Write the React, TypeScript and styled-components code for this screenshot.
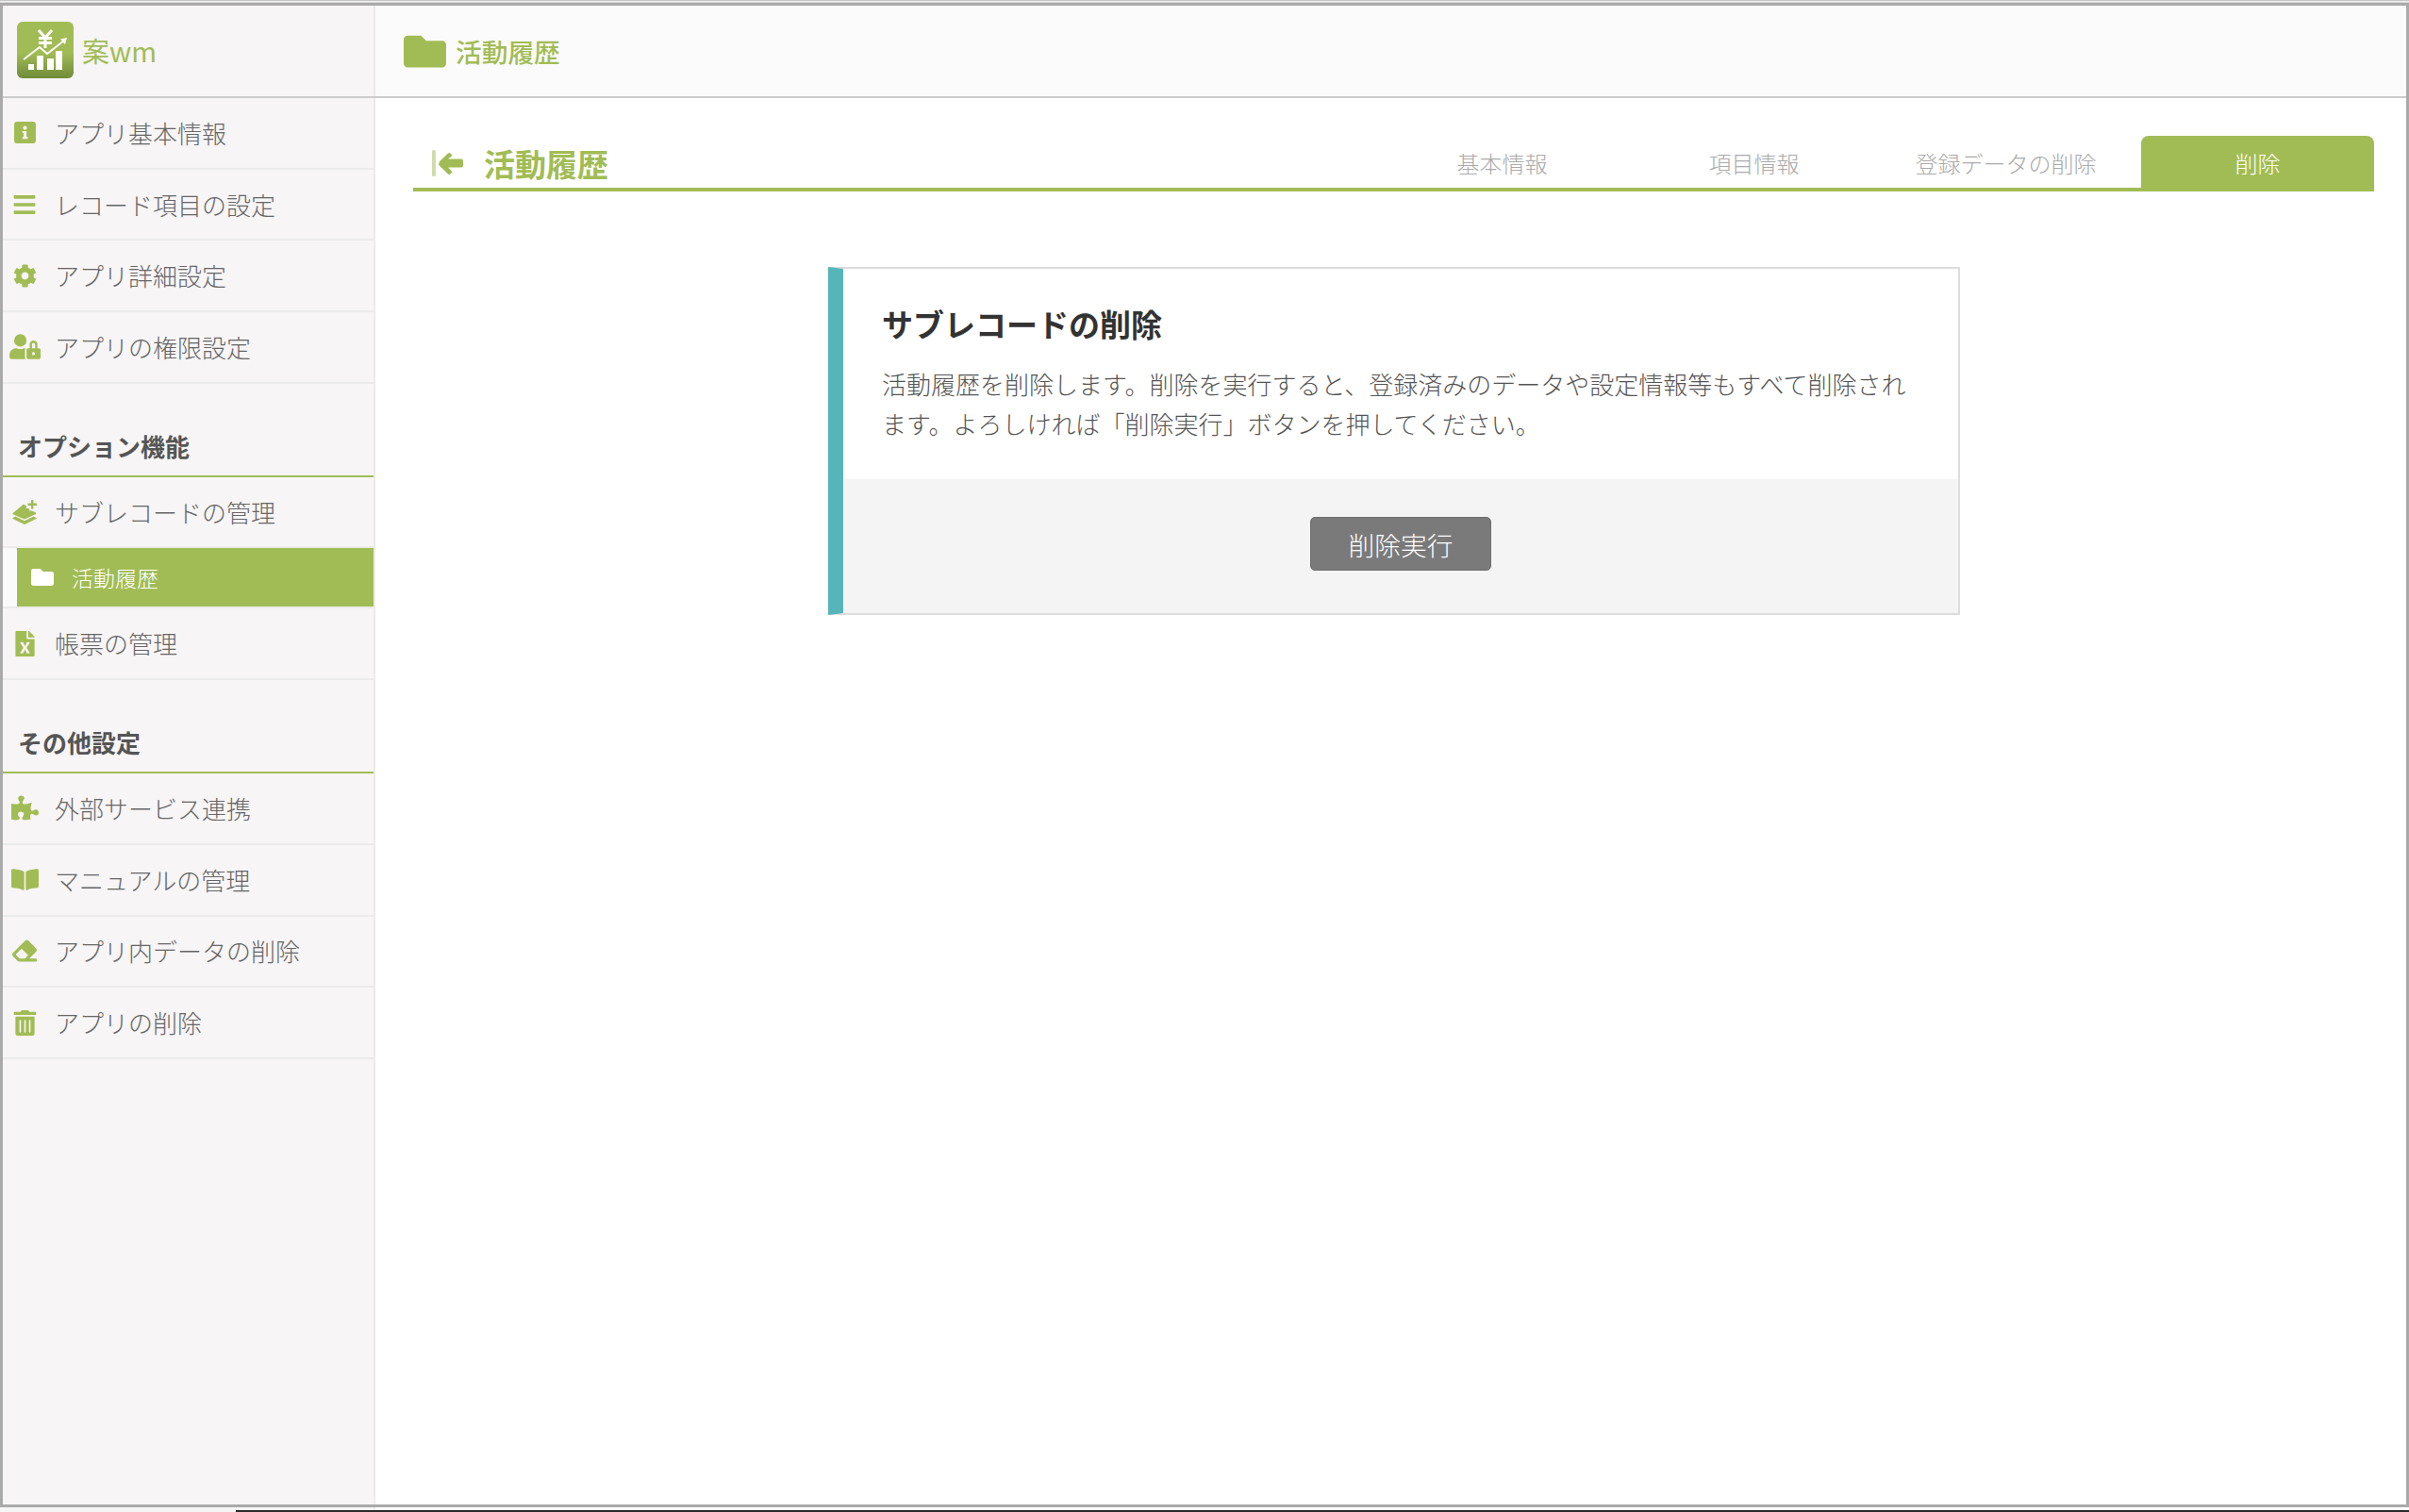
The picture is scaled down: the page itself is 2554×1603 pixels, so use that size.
import React from "react";
import styled, { createGlobalStyle } from "styled-components";
import { FaBars, FaCog, FaUserLock, FaFolder, FaFileExcel, FaPuzzlePiece, FaBookOpen, FaEraser, FaTrashAlt } from "react-icons/fa";

const GREEN = "#a2bc55";

const Global = createGlobalStyle`
  html, body { margin: 0; padding: 0; background: #fff; }
  body { font-family: "Noto Sans CJK JP", "Noto Sans", sans-serif; }
  * { box-sizing: border-box; }
`;

const Page = styled.div`
  position: relative;
  width: 2554px;
  height: 1603px;
  display: flex;
  flex-direction: column;
  overflow: hidden;
  background: #fff;
`;

const TopEdge = styled.div`
  height: 3px;
  flex: none;
  background: linear-gradient(#c4c4c4 0 1px, #f2f2f2 1px 2px, #d8d8d8 2px 3px);
`;

const Frame = styled.div`
  height: 1595px;
  flex: none;
  border: 3px solid #aaa;
  display: flex;
  flex-direction: column;
`;

const BottomEdge = styled.div`
  position: relative;
  flex: 1;
  display: flex;
  &::after {
    content: "";
    position: absolute;
    left: 250px;
    right: 0;
    bottom: 0;
    height: 2px;
    background: #2b2b2b;
  }
`;

const BottomSide = styled.div`
  width: 398px;
  background: #f6f5f5;
  border-right: 2px solid #ebebeb;
`;

const Header = styled.header`
  height: 98px;
  flex: none;
  display: flex;
  background: #fbfbfb;
  border-bottom: 2px solid #ccc;
`;

const Brand = styled.div`
  width: 395px;
  flex: none;
  display: flex;
  align-items: center;
  gap: 9px;
  padding-left: 15px;
  padding-bottom: 2px;
  background: #f7f5f6;
  border-right: 2px solid #ebebeb;
`;

const BrandName = styled.span`
  color: ${GREEN};
  font-size: 29px;
  line-height: 36px;
  font-family: "Noto Sans CJK JP", sans-serif;
`;

const PageBar = styled.div`
  display: flex;
  align-items: center;
  gap: 10px;
  padding-left: 30px;
`;

const PageBarTitle = styled.h1`
  margin: 0;
  color: ${GREEN};
  font-size: 27.7px;
  line-height: 36px;
  font-weight: 500;
`;

const Body = styled.div`
  flex: 1;
  min-height: 0;
  display: flex;
`;

const Sidebar = styled.nav`
  width: 395px;
  flex: none;
  background: #f7f5f6;
  border-right: 2px solid #ebebeb;
`;

const Item = styled.div`
  height: 75.7px;
  display: flex;
  align-items: center;
  border-bottom: 2px solid #ebebeb;
  color: #666;
  font-size: 26px;
  line-height: 36px;
  font-weight: 300;
`;

const IconCell = styled.span`
  width: 46px;
  margin-right: 9px;
  flex: none;
  display: flex;
  justify-content: center;
  align-items: center;
  color: ${GREEN};
`;

const SubItem = styled.div`
  height: 64px;
  padding-left: 15px;
  background: #fbfafa;
  border-bottom: 2px solid #ebebeb;
`;

const SubItemInner = styled.div`
  height: 62px;
  display: flex;
  align-items: center;
  gap: 19px;
  padding-left: 15px;
  background: ${GREEN};
  color: #fff;
  font-size: 23px;
  line-height: 32px;
  font-weight: 300;
`;

const SectionHead = styled.div`
  height: 99px;
  display: flex;
  align-items: flex-end;
  padding: 0 0 13px 16px;
  border-bottom: 2px solid ${GREEN};
  color: #555;
  font-size: 26px;
  line-height: 36px;
  font-weight: 700;
`;

const Main = styled.main`
  flex: 1;
  min-width: 0;
  padding: 40px 34px 0 40px;
`;

const TitleBar = styled.div`
  height: 59px;
  display: flex;
  justify-content: space-between;
  border-bottom: 4px solid ${GREEN};
`;

const Title = styled.div`
  display: flex;
  align-items: center;
  gap: 22px;
  padding-left: 20px;
  padding-top: 2px;
`;

const TitleText = styled.h2`
  margin: 0;
  color: ${GREEN};
  font-size: 33px;
  line-height: 44px;
  font-weight: 700;
`;

const Tabs = styled.div`
  display: flex;
  gap: 20px;
`;

const Tab = styled.div<{ $active?: boolean }>`
  width: 247px;
  display: flex;
  align-items: center;
  justify-content: center;
  padding-top: 2px;
  font-size: 24px;
  line-height: 32px;
  font-weight: 300;
  color: ${(p) => (p.$active ? "#fff" : "#aaa")};
  background: ${(p) => (p.$active ? GREEN : "transparent")};
  border-radius: 8px 8px 0 0;
`;

const Card = styled.section`
  width: 1200px;
  height: 369px;
  margin: 80px 0 0 440px;
  display: flex;
  flex-direction: column;
  border: 2px solid #ddd;
  border-left: 16px solid #55b5bb;
`;

const CardBody = styled.div`
  height: 223px;
  flex: none;
  padding: 39px 34px 0 41px;
  background: #fff;
`;

const CardTitle = styled.h3`
  margin: 0 0 24px;
  color: #333;
  font-size: 33px;
  line-height: 38px;
  font-weight: 700;
`;

const CardText = styled.p`
  margin: 0;
  color: #555;
  font-size: 26px;
  line-height: 42px;
  font-weight: 300;
`;

const CardFooter = styled.div`
  flex: 1;
  display: flex;
  justify-content: center;
  padding-top: 40px;
  background: #f4f4f4;
`;

const DangerButton = styled.button`
  width: 192px;
  height: 57px;
  padding: 0;
  border: 1px solid #6f6f6f;
  border-radius: 5px;
  background: #7a7a7a;
  color: #fff;
  font-family: inherit;
  font-size: 27.7px;
  line-height: 36px;
  font-weight: 300;
`;

const InfoSquare = () => (
  <svg width="23" height="23" viewBox="0 0 23 23" fill="currentColor">
    <path
      fillRule="evenodd"
      d="M3 0h17a3 3 0 0 1 3 3v17a3 3 0 0 1-3 3H3a3 3 0 0 1-3-3V3a3 3 0 0 1 3-3zM11.5 4.5a2.1 2.1 0 1 0 0 4.2 2.1 2.1 0 0 0 0-4.2zM8.8 10v2h1.3v4H8.8v2.2h5.6V16h-1.3v-6z"
    />
  </svg>
);

const LayerPlus = () => (
  <svg width="26" height="26" viewBox="0 0 26 26" fill="currentColor">
    <path d="M16.5 3.5h3.5V0h2.4v3.5H26v2.4h-3.6v3.5H20V5.900h-3.500z" />
    <path d="M12 4.600l3 1.900v2.500h3.200v2.500h2.700l4 2.100c.6.4.6 1 0 1.300l-11.100 5.300c-.5.200-1 .200-1.500 0L.700 15.300c-.6-.300-.6-.9 0-1.300z" />
    <path d="M3.400 17.600l8.600 4.100c.6.300 1.400.3 2 0l8.600-4.100 2.700 1.300c.600.300.600.900 0 1.200l-11.500 5.700c-.500.200-1 .200-1.500 0L.700 20.100c-.600-.300-.600-.900 0-1.200z" />
  </svg>
);

const BackArrow = () => (
  <svg width="33" height="28" viewBox="0 0 33 28" fill={GREEN}>
    <rect x="0" y="0" width="4" height="28" rx="1.500" opacity="0.5" />
    <path d="M7.700 12.600l9.300-9c.7-.700 1.800-.700 2.500 0l1 1c.7.700.7 1.800 0 2.500L17 9.500h14c1 0 2 .800 2 2v5c0 1.200-1 2-2 2H17l3.500 3.400c.7.700.7 1.800 0 2.500l-1 1c-.7.700-1.800.700-2.500 0l-9.300-9c-.8-.800-.8-2 0-2.800z" />
  </svg>
);

const Logo = () => (
  <svg width="60" height="60" viewBox="0 0 60 60">
    <defs>
      <linearGradient id="logo-bg" x1="0" y1="0" x2="0" y2="1">
        <stop offset="0.55" stopColor={GREEN} />
        <stop offset="1" stopColor="#6f8b38" />
      </linearGradient>
    </defs>
    <rect width="60" height="60" rx="6" fill="url(#logo-bg)" />
    <path d="M23 9l7 8 7-8M30 17v11M23 17.500h14M23 22.500h14" fill="none" stroke="#fff" strokeWidth="3" />
    <path d="M7 40l17-13 8 7 18-14" fill="none" stroke="#fff" strokeWidth="1.800" />
    <path d="M46 18.500l7-1.500-2 7z" fill="#fff" />
    <path d="M12 45h6v6h-6zM21 36h7v15h-7zM32 39h7v12h-7zM41 31h7v20h-7z" fill="#fff" />
  </svg>
);

type NavItem = { icon: React.ReactNode; label: string };

const basic: NavItem[] = [
  { icon: <InfoSquare />, label: "アプリ基本情報" },
  { icon: <FaBars size={26} />, label: "レコード項目の設定" },
  { icon: <FaCog size={25} />, label: "アプリ詳細設定" },
  { icon: <FaUserLock size={33} />, label: "アプリの権限設定" },
];

const others: NavItem[] = [
  { icon: <FaPuzzlePiece size={29} />, label: "外部サービス連携" },
  { icon: <FaBookOpen size={29} />, label: "マニュアルの管理" },
  { icon: <FaEraser size={26} />, label: "アプリ内データの削除" },
  { icon: <FaTrashAlt size={27} />, label: "アプリの削除" },
];

const tabs = ["基本情報", "項目情報", "登録データの削除", "削除"];

const Row = ({ icon, label }: NavItem) => (
  <Item>
    <IconCell>{icon}</IconCell>
    <span>{label}</span>
  </Item>
);

export default function App() {
  return (
    <Page>
      <Global />
      <TopEdge />
      <Frame>
        <Header>
          <Brand>
            <Logo />
            <BrandName>案wm</BrandName>
          </Brand>
          <PageBar>
            <FaFolder size={45} color={GREEN} />
            <PageBarTitle>活動履歴</PageBarTitle>
          </PageBar>
        </Header>
        <Body>
          <Sidebar>
            {basic.map((n) => (
              <Row key={n.label} {...n} />
            ))}
            <SectionHead>オプション機能</SectionHead>
            <Row icon={<LayerPlus />} label="サブレコードの管理" />
            <SubItem>
              <SubItemInner>
                <FaFolder size={24} />
                活動履歴
              </SubItemInner>
            </SubItem>
            <Row icon={<FaFileExcel size={27} />} label="帳票の管理" />
            <SectionHead>その他設定</SectionHead>
            {others.map((n) => (
              <Row key={n.label} {...n} />
            ))}
          </Sidebar>
          <Main>
            <TitleBar>
              <Title>
                <BackArrow />
                <TitleText>活動履歴</TitleText>
              </Title>
              <Tabs>
                {tabs.map((t) => (
                  <Tab key={t} $active={t === "削除"}>
                    {t}
                  </Tab>
                ))}
              </Tabs>
            </TitleBar>
            <Card>
              <CardBody>
                <CardTitle>サブレコードの削除</CardTitle>
                <CardText>
                  活動履歴を削除します。削除を実行すると、登録済みのデータや設定情報等もすべて削除されます。よろしければ「削除実行」ボタンを押してください。
                </CardText>
              </CardBody>
              <CardFooter>
                <DangerButton>削除実行</DangerButton>
              </CardFooter>
            </Card>
          </Main>
        </Body>
      </Frame>
      <BottomEdge>
        <BottomSide />
      </BottomEdge>
    </Page>
  );
}
